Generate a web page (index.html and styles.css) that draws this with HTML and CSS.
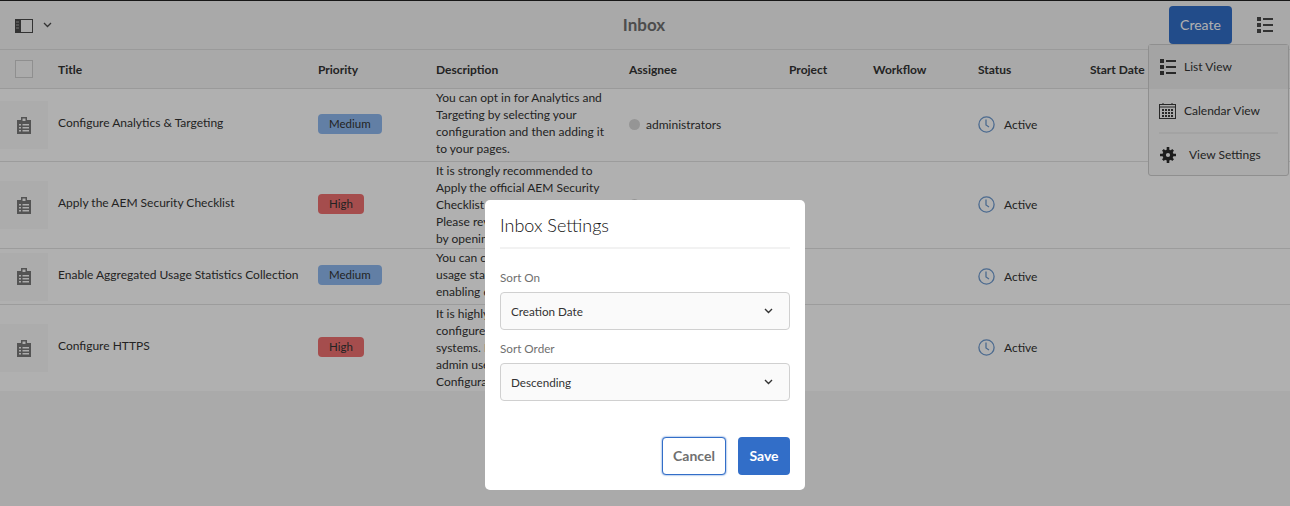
FILE: index.html
```html
<!DOCTYPE html>
<html>

<head>
    <meta charset="utf-8">
    <title>Inbox</title>
    <link rel="stylesheet" href="styles.css">
</head>

<body>
    <svg class="icon-defs" width="0" height="0">
        <symbol id="icon-task" viewBox="0 0 14 17">
            <path d="M0 3h4V0h6v3h4v14H0zM5.500 1.500V4h3V1.500zM2 7v1.500h2V7zM5.500 7v1.500H12V7zM2 10v1.500h2V10zM5.500 10v1.500H12V10zM2 13v1.500h2V13zM5.500 13v1.500H12V13z" fill-rule="evenodd" fill="#7a7a7a" />
        </symbol>
        <symbol id="icon-clock" viewBox="0 0 17 17">
            <circle cx="8.500" cy="8.500" r="7.600" fill="none" stroke="#6f9bd0" stroke-width="1.300" />
            <path d="M8 3.500v5.500l3 2" fill="none" stroke="#6f9bd0" stroke-width="1.300" />
        </symbol>
    </svg>

    <div class="toolbar">
        <div class="toolbar-left">
            <svg class="rail-icon" width="18" height="14" viewBox="0 0 18 14">
                <rect x="0.500" y="0.500" width="17" height="13" fill="none" stroke="#4a4a4a" />
                <rect x="0" y="0" width="6" height="14" fill="#4a4a4a" />
                <path d="M1 3h3M1 6h3M1 9h3" stroke="#a9a9a9" stroke-width="1" />
            </svg>
            <svg class="chevron" width="9" height="6" viewBox="0 0 9 6">
                <path d="M1 1l3.500 3.500L8 1" fill="none" stroke="#4a4a4a" stroke-width="1.300" />
            </svg>
        </div>
        <div class="toolbar-title">Inbox</div>
        <div class="toolbar-right">
            <button class="create-btn">Create</button>
            <svg class="view-icon" width="16" height="16" viewBox="0 0 16 16">
                <path d="M0 0h4v4H0zM0 6h4v4H0zM0 12h4v4H0zM6 1h10v2H6zM6 7h10v2H6zM6 13h10v2H6z" fill="#4a4a4a" />
            </svg>
        </div>
    </div>

    <table class="inbox">
        <colgroup>
            <col class="col-title">
            <col class="col-priority">
            <col class="col-desc">
            <col class="col-assignee">
            <col class="col-project">
            <col class="col-workflow">
            <col class="col-status">
            <col class="col-start">
        </colgroup>
        <thead>
            <tr>
                <th><div class="title-head"><span class="checkbox"></span>Title</div></th>
                <th>Priority</th>
                <th>Description</th>
                <th>Assignee</th>
                <th>Project</th>
                <th>Workflow</th>
                <th>Status</th>
                <th>Start Date</th>
            </tr>
        </thead>
        <tbody>
            <tr class="row-1">
                <td>
                    <div class="title-cell">
                        <span class="thumb"><svg width="14" height="17"><use href="#icon-task" /></svg></span>
                        <span class="title-text">Configure Analytics &amp; Targeting</span>
                    </div>
                </td>
                <td><span class="badge medium">Medium</span></td>
                <td class="desc">You can opt in for Analytics and<br>Targeting by selecting your<br>configuration and then adding it<br>to your pages.</td>
                <td class="assignee"><span class="avatar"></span>administrators</td>
                <td></td>
                <td></td>
                <td><span class="status"><svg width="17" height="17"><use href="#icon-clock" /></svg>Active</span></td>
                <td></td>
            </tr>
            <tr class="row-2">
                <td>
                    <div class="title-cell">
                        <span class="thumb"><svg width="14" height="17"><use href="#icon-task" /></svg></span>
                        <span class="title-text">Apply the AEM Security Checklist</span>
                    </div>
                </td>
                <td><span class="badge high">High</span></td>
                <td class="desc">It is strongly recommended to<br>Apply the official AEM Security<br>Checklist to your instance.<br>Please review the checklist<br>by opening the task.</td>
                <td class="assignee"><span class="avatar"></span>administrators</td>
                <td></td>
                <td></td>
                <td><span class="status"><svg width="17" height="17"><use href="#icon-clock" /></svg>Active</span></td>
                <td></td>
            </tr>
            <tr class="row-3">
                <td>
                    <div class="title-cell">
                        <span class="thumb"><svg width="14" height="17"><use href="#icon-task" /></svg></span>
                        <span class="title-text">Enable Aggregated Usage Statistics Collection</span>
                    </div>
                </td>
                <td><span class="badge medium">Medium</span></td>
                <td class="desc">You can contribute product<br>usage statistics to Adobe by<br>enabling data collection.</td>
                <td></td>
                <td></td>
                <td></td>
                <td><span class="status"><svg width="17" height="17"><use href="#icon-clock" /></svg>Active</span></td>
                <td></td>
            </tr>
            <tr class="row-4">
                <td>
                    <div class="title-cell">
                        <span class="thumb"><svg width="14" height="17"><use href="#icon-task" /></svg></span>
                        <span class="title-text">Configure HTTPS</span>
                    </div>
                </td>
                <td><span class="badge high">High</span></td>
                <td class="desc">It is highly recommended to<br>configure HTTPS on all your<br>systems. Make sure the<br>admin user has access to<br>Configuration.</td>
                <td></td>
                <td></td>
                <td></td>
                <td><span class="status"><svg width="17" height="17"><use href="#icon-clock" /></svg>Active</span></td>
                <td></td>
            </tr>
        </tbody>
    </table>

    <div class="view-menu">
        <div class="menu-item selected">
            <svg width="16" height="16" viewBox="0 0 16 16"><path d="M0 0h4v4H0zM0 6h4v4H0zM0 12h4v4H0zM6 1h10v2H6zM6 7h10v2H6zM6 13h10v2H6z" fill="#3a3a3a" /></svg>
            List View
        </div>
        <div class="menu-item calendar">
            <svg width="17" height="16" viewBox="0 0 17 16"><path d="M4 0v2M13 0v2" stroke="#3a3a3a" /><rect x="0.500" y="1.500" width="16" height="14" fill="none" stroke="#3a3a3a" /><path d="M1 4h15" stroke="#3a3a3a" /><path d="M3 6h2v2H3zM6 6h2v2H6zM9 6h2v2H9zM12 6h2v2h-2zM3 9h2v2H3zM6 9h2v2H6zM9 9h2v2H9zM12 9h2v2h-2zM3 12h2v2H3zM6 12h2v2H6zM9 12h2v2H9zM12 12h2v2h-2z" fill="#3a3a3a" /></svg>
            Calendar View
        </div>
        <div class="menu-divider"></div>
        <div class="menu-item settings">
            <svg width="16" height="16" viewBox="0 0 16 16"><path d="M8 2.500a5.500 5.500 0 1 0 0 11 5.500 5.500 0 0 0 0-11zm0 3.400a2.100 2.100 0 1 1 0 4.200 2.100 2.100 0 0 1 0-4.200z" fill="#2a2a2a" fill-rule="evenodd" /><path d="M6.700 0h2.600v3H6.700zM6.700 13h2.600v3H6.700zM0 6.700h3v2.600H0zM13 6.700h3v2.600h-3zM2 3.800L3.800 2l2 2L4 5.800zM10.200 12l1.800-1.800 2 2L12.200 14zM12.200 2L14 3.800l-2 2L10.200 4zM4 10.200L5.800 12l-2 2L2 12.200z" fill="#2a2a2a" /></svg>
            View Settings
        </div>
    </div>

    <div class="underlay">
        <div class="dialog">
            <h2 class="dialog-title">Inbox Settings</h2>
            <label class="field-label">Sort On</label>
            <div class="select">Creation Date
                <svg width="9" height="6" viewBox="0 0 9 6"><path d="M1 1l3.500 3.500L8 1" fill="none" stroke="#333" stroke-width="1.400" /></svg>
            </div>
            <label class="field-label">Sort Order</label>
            <div class="select">Descending
                <svg width="9" height="6" viewBox="0 0 9 6"><path d="M1 1l3.500 3.500L8 1" fill="none" stroke="#333" stroke-width="1.400" /></svg>
            </div>
            <div class="dialog-actions">
                <button class="btn-cancel">Cancel</button>
                <button class="btn-save">Save</button>
            </div>
        </div>
    </div>
</body>

</html>
```

FILE: styles.css
```css
* {
    box-sizing: border-box;
}

html,
body {
    height: 100%;
}

body {
    margin: 0;
    background-color: #f6f6f6;
    font-family: Lato, "Open Sans", Arial, sans-serif;
    font-size: 12px;
    color: #333333;
    overflow: hidden;
}

.icon-defs {
    position: absolute;
}

/* toolbar */
.toolbar {
    display: flex;
    align-items: center;
    height: 50px;
    padding: 0 17px 0 15px;
    background-color: #f5f5f5;
    border-top: 1px solid #222222;
    border-bottom: 1px solid #e0e0e0;
}

.toolbar-left,
.toolbar-right {
    flex: 1;
    display: flex;
    align-items: center;
}

.toolbar-right {
    justify-content: flex-end;
}

.rail-icon {
    margin-top: 2px;
}

.chevron {
    margin-left: 10px;
}

.toolbar-title {
    padding-bottom: 2px;
    font-size: 17px;
    font-weight: 700;
    color: #707070;
}

.create-btn {
    width: 63px;
    height: 38px;
    padding-bottom: 3px;
    border: none;
    border-radius: 4px;
    background-color: #326ec8;
    color: #ffffff;
    font-family: inherit;
    font-size: 14px;
    font-weight: 400;
}

.view-icon {
    margin-left: 25px;
}

/* table */
.inbox {
    width: 1290px;
    table-layout: fixed;
    border-collapse: separate;
    border-spacing: 0;
    background-color: #ffffff;
}

.col-title { width: 318px; }
.col-priority { width: 118px; }
.col-desc { width: 193px; }
.col-assignee { width: 160px; }
.col-project { width: 84px; }
.col-workflow { width: 105px; }
.col-status { width: 112px; }

.inbox thead tr {
    height: 39px;
}

.inbox th {
    padding: 0;
    text-align: left;
    font-weight: 700;
    color: #333333;
    background-color: #f5f5f5;
    border-bottom: 1px solid #e0e0e0;
}

.title-head {
    display: flex;
    align-items: center;
    padding-left: 15px;
}

.checkbox {
    width: 18px;
    height: 18px;
    margin-right: 25px;
    border: 1px solid #d0d0d0;
    background-color: #f8f8f8;
}

.inbox td {
    padding: 0;
    vertical-align: middle;
    white-space: nowrap;
    border-bottom: 1px solid #e2e2e2;
}

.inbox .row-4 td {
    border-bottom: none;
}

.row-1 { height: 73px; }
.row-2 { height: 87px; }
.row-3 { height: 56px; }
.row-4 { height: 86px; }

.title-cell {
    display: flex;
    align-items: center;
}

.thumb {
    display: flex;
    align-items: center;
    justify-content: center;
    width: 48px;
    height: 48px;
    margin-right: 10px;
    background-color: #f9f9f9;
}

.title-text {
    margin-top: -5px;
}

.badge {
    display: inline-block;
    height: 20px;
    margin-bottom: 3px;
    padding: 0 11px;
    border-radius: 4px;
    font-size: 11.5px;
    line-height: 20px;
}

.medium {
    background-color: #8fb9f0;
}

.high {
    background-color: #f07070;
}

.inbox .desc {
    vertical-align: top;
    line-height: 17px;
}

.inbox .assignee {
    padding-bottom: 1px;
}

.avatar {
    display: inline-block;
    width: 11px;
    height: 11px;
    margin-right: 6px;
    border-radius: 50%;
    background-color: #d8d8d8;
    vertical-align: -1px;
}

.status {
    display: flex;
    align-items: center;
    padding-bottom: 1px;
}

.status svg {
    margin-right: 9px;
}

/* view switcher */
.view-menu {
    position: absolute;
    top: 44px;
    right: 1px;
    width: 141px;
    height: 132px;
    background-color: #f8f8f8;
    border: 1px solid #cfcfcf;
    border-radius: 3px;
}

.menu-item {
    display: flex;
    align-items: center;
    height: 43px;
    padding: 0 10px 2px 11px;
    gap: 8px;
    color: #333333;
}

.menu-item svg {
    margin-top: 2px;
}

.menu-item.selected {
    height: 44px;
    background-color: #eeeeee;
}

.menu-item.calendar {
    padding: 0 10px 1px;
}

.menu-divider {
    height: 2px;
    margin: 0 10px;
    background-color: #ececec;
}

.menu-item.settings {
    padding-bottom: 3px;
    gap: 13px;
}

/* settings dialog */
.underlay {
    position: fixed;
    top: 0;
    left: 0;
    width: 100%;
    height: 100%;
    display: flex;
    justify-content: center;
    align-items: flex-start;
    padding-top: 200px;
    background-color: rgba(0, 0, 0, 0.31);
}

.dialog {
    width: 320px;
    height: 290px;
    padding: 10px 15px 15px;
    background-color: #ffffff;
    border-radius: 5px;
    font-size: 11.7px;
}

.dialog-title {
    height: 39px;
    margin: 0 0 22px;
    font-size: 18px;
    font-weight: 300;
    line-height: 30px;
    color: #111111;
    border-bottom: 2px solid #f2f2f2;
}

.field-label {
    display: block;
    height: 15px;
    margin-bottom: 6px;
    line-height: 13px;
    color: #707070;
}

.select {
    display: flex;
    align-items: center;
    justify-content: space-between;
    height: 38px;
    margin-bottom: 12px;
    padding: 0 16px 1px 10px;
    background-color: #fafafa;
    border: 1px solid #d0d0d0;
    border-radius: 4px;
}

.dialog-actions {
    display: flex;
    justify-content: flex-end;
    gap: 12px;
    margin-top: 36px;
}

.dialog-actions button {
    height: 38px;
    padding-bottom: 3px;
    border-radius: 4px;
    font-family: inherit;
    font-size: 14px;
    font-weight: 700;
}

.btn-cancel {
    width: 64px;
    background-color: #ffffff;
    border: 1px solid #326ec8;
    box-shadow: 0 0 2px #326ec8;
    color: #707070;
}

.btn-save {
    width: 52px;
    background-color: #326ec8;
    border: none;
    color: #ffffff;
}
```
